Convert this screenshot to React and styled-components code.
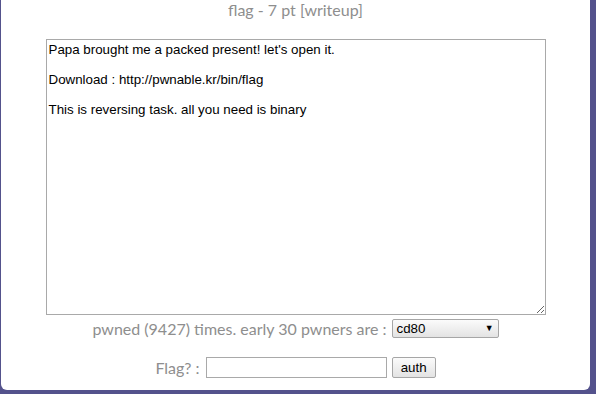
import React from "react";
import styled, { createGlobalStyle } from "styled-components";

const Global = createGlobalStyle`
html, body {
  margin: 0;
  padding: 0;
  background: #54528c;
  height: 394px;
  overflow: hidden;
}
`

const Panel = styled.div`
margin: 0 0 0 1px;
width: 589px;
height: 390px;
background: #ffffff;
border-radius: 0 0 6px 6px;
display: flex;
flex-direction: column;
align-items: center;
font-family: Lato, "Open Sans", sans-serif;
color: #8e8e8e;
`
const Title = styled.div`
font-size: 16px;
line-height: 20px;
height: 20px;
`
const Description = styled.textarea`
margin-top: 19px;
width: 500px;
height: 276px;
box-sizing: border-box;
border: 1px solid #a9a9a9;
padding: 2px;
font-family: "Liberation Sans", Arial, sans-serif;
font-size: 13.333px;
line-height: 15px;
color: #000;
resize: both;
outline: none;
`
const Row = styled.div`
display: flex;
align-items: center;
gap: 5px;
margin-top: ${p => p.$top}px;
font-size: 16px;
`
const SelectBox = styled.div`
position: relative;
width: 107px;
height: 19px;
box-sizing: border-box;
border: 1px solid #a6a6a6;
border-radius: 2px;
background: linear-gradient(#fbfbfb, #e3e3e3);
font-family: "Liberation Sans", Arial, sans-serif;
font-size: 13.333px;
color: #000;
padding-left: 4px;
line-height: 17px;
`
const Arrow = styled.span`
position: absolute;
right: 4px;
top: 0;
font-size: 9px;
line-height: 17px;
`
const FlagInput = styled.input`
width: 181px;
height: 21px;
box-sizing: border-box;
border: 1px solid #a9a9a9;
padding: 0 2px;
margin: 0 0 0 1px;
outline: none;
`
const AuthButton = styled.button`
width: 44px;
height: 21px;
box-sizing: border-box;
border: 1px solid #a6a6a6;
border-radius: 2px;
background: linear-gradient(#fbfbfb, #e3e3e3);
font-family: "Liberation Sans", Arial, sans-serif;
font-size: 13.333px;
color: #000;
padding: 0;
margin: 0;
`

const text = "Papa brought me a packed present! let's open it.\n\nDownload : http://pwnable.kr/bin/flag\n\nThis is reversing task. all you need is binary"

const App = () => {
    return (
        <>
            <Global />
            <Panel>
                <Title>flag - 7 pt [writeup]</Title>
                <Description defaultValue={text} />
                <Row $top={4}>
                    <span>pwned (9427) times. early 30 pwners are :</span>
                    <SelectBox>cd80<Arrow>▼</Arrow></SelectBox>
                </Row>
                <Row $top={19}>
                    <span>Flag? :</span>
                    <FlagInput />
                    <AuthButton>auth</AuthButton>
                </Row>
            </Panel>
        </>
    )
}

export default App
